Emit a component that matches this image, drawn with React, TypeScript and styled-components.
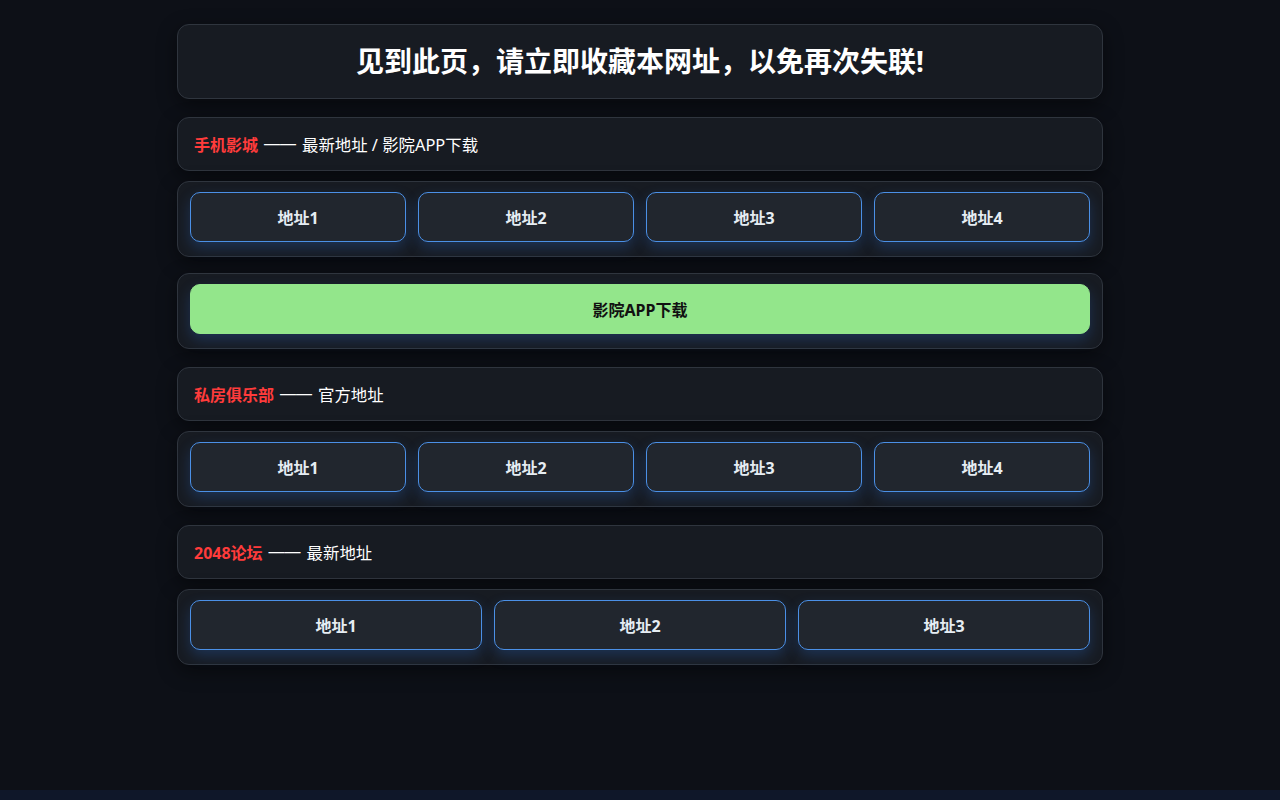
import React from 'react';
import styled, { createGlobalStyle } from 'styled-components';

const GlobalStyle = createGlobalStyle`
  html {
    background: #0f1729;
  }
  body {
    margin: 0;
    font-family: 'Noto Sans', 'Noto Sans CJK SC', sans-serif;
    color: #fff;
  }
`;

const Page = styled.div`
  min-height: 790px;
  background: #0d1017;
  padding-top: 24px;
  box-sizing: border-box;
`;

const Container = styled.div`
  width: 926px;
  margin: 0 auto;
  display: flex;
  flex-direction: column;
`;

const Card = styled.div`
  background: #171b22;
  border: 1px solid #2f353e;
  border-radius: 12px;
  box-shadow: 0 6px 20px rgba(0, 0, 0, 0.45);
`;

const TitleCard = styled(Card)`
  padding: 17px 20px;
  margin-bottom: 18px;
  text-align: center;
  > h1 {
    margin: 0;
    font-size: 28px;
    line-height: 39px;
    font-weight: 700;
    color: #fff;
  }
`;

const SectionHead = styled(Card)`
  height: 54px;
  box-sizing: border-box;
  display: flex;
  align-items: center;
  padding: 0 16px;
  margin-bottom: 10px;
  font-size: 16px;
  white-space: pre;
  > .name {
    color: #ff3b3b;
    font-weight: 700;
  }
  > .dash {
    font-family: 'Liberation Sans', sans-serif;
    margin: 0 6px;
  }
  > .note {
    font-size: 16.4px;
  }
`;

const Group = styled(Card)<{ $cols: number; $tight?: boolean }>`
  display: grid;
  grid-template-columns: repeat(${(p) => p.$cols}, 1fr);
  gap: 12px;
  padding: 10px 12px 14px;
  margin-bottom: ${(p) => (p.$tight ? 16 : 18)}px;
`;

const LinkButton = styled.a`
  height: 50px;
  display: flex;
  align-items: center;
  justify-content: center;
  box-sizing: border-box;
  background: #21262e;
  border: 1px solid #4b90e6;
  border-radius: 10px;
  color: #e6edf3;
  font-size: 16px;
  font-weight: 700;
  text-decoration: none;
  box-shadow: 0 6px 14px rgba(45, 110, 210, 0.28);
`;

const AppButton = styled(LinkButton)`
  background: #93e68b;
  border-color: #93e68b;
  color: #111;
`;

type Section = {
  name: string;
  note: string;
  links: number;
  app?: boolean;
};

const sections: Section[] = [
  { name: '手机影城', note: '最新地址 / 影院APP下载', links: 4, app: true },
  { name: '私房俱乐部', note: '官方地址', links: 4 },
  { name: '2048论坛', note: '最新地址', links: 3 },
];

const App: React.FC = () => {
  return (
    <Page>
      <GlobalStyle />
      <Container>
        <TitleCard>
          <h1>见到此页，请立即收藏本网址，以免再次失联!</h1>
        </TitleCard>
        {sections.map((s) => (
          <React.Fragment key={s.name}>
            <SectionHead>
              <span className="name">{s.name}</span>
              <span className="dash">——</span>
              <span className="note">{s.note}</span>
            </SectionHead>
            <Group $cols={s.links} $tight={s.app}>
              {Array.from({ length: s.links }, (_, i) => (
                <LinkButton key={i} href="#">
                  地址{i + 1}
                </LinkButton>
              ))}
            </Group>
            {s.app && (
              <Group $cols={1}>
                <AppButton href="#">影院APP下载</AppButton>
              </Group>
            )}
          </React.Fragment>
        ))}
      </Container>
    </Page>
  );
};

export default App;
